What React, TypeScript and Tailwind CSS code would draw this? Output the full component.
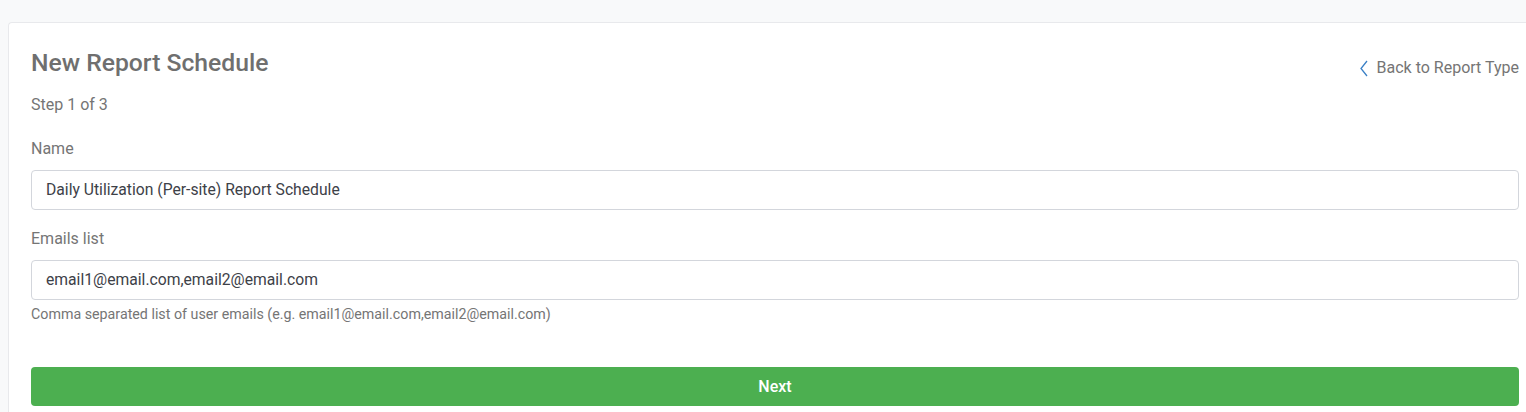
import React from "react";

export default function App() {
  return (
    <div
      className="w-[1526px] h-[412px] overflow-hidden bg-[#f8f9fa] pt-[22px] pl-[8px]"
      style={{ fontFamily: "Roboto, 'Liberation Sans', sans-serif" }}
    >
      <div className="h-[420px] bg-white border-l border-t border-[#e8e9ec] rounded-tl-[4px] pl-[22px] pr-[7px] pt-[25px]">
        <div className="flex items-start justify-between">
          <div>
            <h1 className="text-[24.7px] leading-[30px] font-medium text-[#6f6f6f]">New Report Schedule</h1>
            <div className="mt-[17px] text-[16px] leading-[20px] text-[#757575]">Step 1 of 3</div>
          </div>
          <a className="mt-[10px] flex items-center gap-[9px] text-[16px] leading-[20px] text-[#757575]">
            <svg width="8" height="17" viewBox="0 0 8 17" fill="none">
              <path d="M7 1 L1 8.5 L7 16" stroke="#3b80c6" strokeWidth="1.3" />
            </svg>
            Back to Report Type
          </a>
        </div>
        <div className="mt-[24px] text-[16px] leading-[20px] text-[#757575]">Name</div>
        <div className="mt-[11px] h-[40px] border border-[#d3d6dc] rounded-[4px] flex items-center px-[14px] text-[15.7px] text-[#3d4148]">
          Daily Utilization (Per-site) Report Schedule
        </div>
        <div className="mt-[19px] text-[16px] leading-[20px] text-[#757575]">Emails list</div>
        <div className="mt-[11px] h-[40px] border border-[#d3d6dc] rounded-[4px] flex items-center px-[14px] text-[15.7px] text-[#3d4148]">
          email1@email.com,email2@email.com
        </div>
        <div className="mt-[4px] text-[14.25px] leading-[20px] text-[#757575]">
          Comma separated list of user emails (e.g. email1@email.com,email2@email.com)
        </div>
        <button className="mt-[43px] w-full h-[39px] rounded-[4px] bg-[#4caf50] text-white text-[16px] font-medium flex items-center justify-center">
          Next
        </button>
      </div>
    </div>
  );
}
